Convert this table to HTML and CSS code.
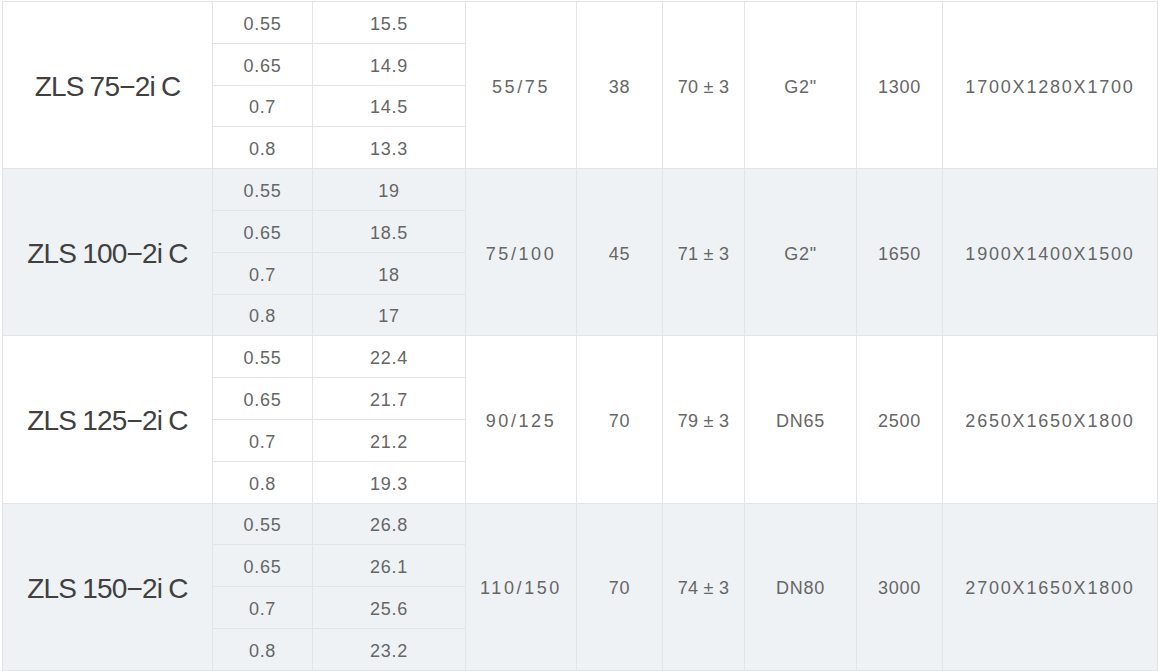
FILE: index.html
```html
<!DOCTYPE html>
<html>
<head>
<meta charset="utf-8">
<link rel="stylesheet" href="styles.css">
</head>
<body>
<table class="spec">
  <colgroup>
    <col class="c-model"><col class="c-p"><col class="c-f"><col class="c-d"><col class="c-n"><col class="c-t"><col class="c-pipe"><col class="c-w"><col class="c-dim">
  </colgroup>
  <tbody class="grp">
    <tr><td class="model" rowspan="4">ZLS 75−2i C</td><td>0.55</td><td>15.5</td><td class="ratio" rowspan="4">55/75</td><td rowspan="4">38</td><td class="temp" rowspan="4">70 ± 3</td><td rowspan="4">G2"</td><td rowspan="4">1300</td><td class="dim" rowspan="4">1700X1280X1700</td></tr>
    <tr><td>0.65</td><td>14.9</td></tr>
    <tr><td>0.7</td><td>14.5</td></tr>
    <tr><td>0.8</td><td>13.3</td></tr>
  </tbody>
  <tbody class="grp alt">
    <tr><td class="model" rowspan="4">ZLS 100−2i C</td><td>0.55</td><td>19</td><td class="ratio" rowspan="4">75/100</td><td rowspan="4">45</td><td class="temp" rowspan="4">71 ± 3</td><td rowspan="4">G2"</td><td rowspan="4">1650</td><td class="dim" rowspan="4">1900X1400X1500</td></tr>
    <tr><td>0.65</td><td>18.5</td></tr>
    <tr><td>0.7</td><td>18</td></tr>
    <tr><td>0.8</td><td>17</td></tr>
  </tbody>
  <tbody class="grp">
    <tr><td class="model" rowspan="4">ZLS 125−2i C</td><td>0.55</td><td>22.4</td><td class="ratio" rowspan="4">90/125</td><td rowspan="4">70</td><td class="temp" rowspan="4">79 ± 3</td><td rowspan="4">DN65</td><td rowspan="4">2500</td><td class="dim" rowspan="4">2650X1650X1800</td></tr>
    <tr><td>0.65</td><td>21.7</td></tr>
    <tr><td>0.7</td><td>21.2</td></tr>
    <tr><td>0.8</td><td>19.3</td></tr>
  </tbody>
  <tbody class="grp alt">
    <tr><td class="model" rowspan="4">ZLS 150−2i C</td><td>0.55</td><td>26.8</td><td class="ratio" rowspan="4">110/150</td><td rowspan="4">70</td><td class="temp" rowspan="4">74 ± 3</td><td rowspan="4">DN80</td><td rowspan="4">3000</td><td class="dim" rowspan="4">2700X1650X1800</td></tr>
    <tr><td>0.65</td><td>26.1</td></tr>
    <tr><td>0.7</td><td>25.6</td></tr>
    <tr><td>0.8</td><td>23.2</td></tr>
  </tbody>
</table>
</body>
</html>
```
FILE: styles.css
```css
html, body {
  margin: 0;
  padding: 0;
  background: #ffffff;
}
body {
  font-family: "Liberation Sans", Arial, sans-serif;
}
.spec {
  border-collapse: collapse;
  table-layout: fixed;
  width: 1156px;
  margin: 1px 0 0 2px;
  color: #666666;
  font-size: 18px;
}
.c-model { width: 210px; }
.c-p { width: 100px; }
.c-f { width: 153px; }
.c-d { width: 111px; }
.c-n { width: 86px; }
.c-t { width: 82px; }
.c-pipe { width: 112px; }
.c-w { width: 86px; }
.c-dim { width: 215px; }
.spec td {
  border: 1px solid #e2e5e8;
  height: 36.8px;
  padding: 4px 0 0 0;
  text-align: center;
  vertical-align: middle;
  letter-spacing: 0.7px;
  white-space: nowrap;
}
.alt td {
  background: #eff2f5;
}
.spec .model {
  font-size: 28px;
  color: #404040;
  letter-spacing: -0.8px;
  word-spacing: -1px;
}
.spec .ratio {
  letter-spacing: 2.6px;
}
.spec .temp {
  letter-spacing: 0.3px;
}
.spec .dim {
  letter-spacing: 1.8px;
}
```
